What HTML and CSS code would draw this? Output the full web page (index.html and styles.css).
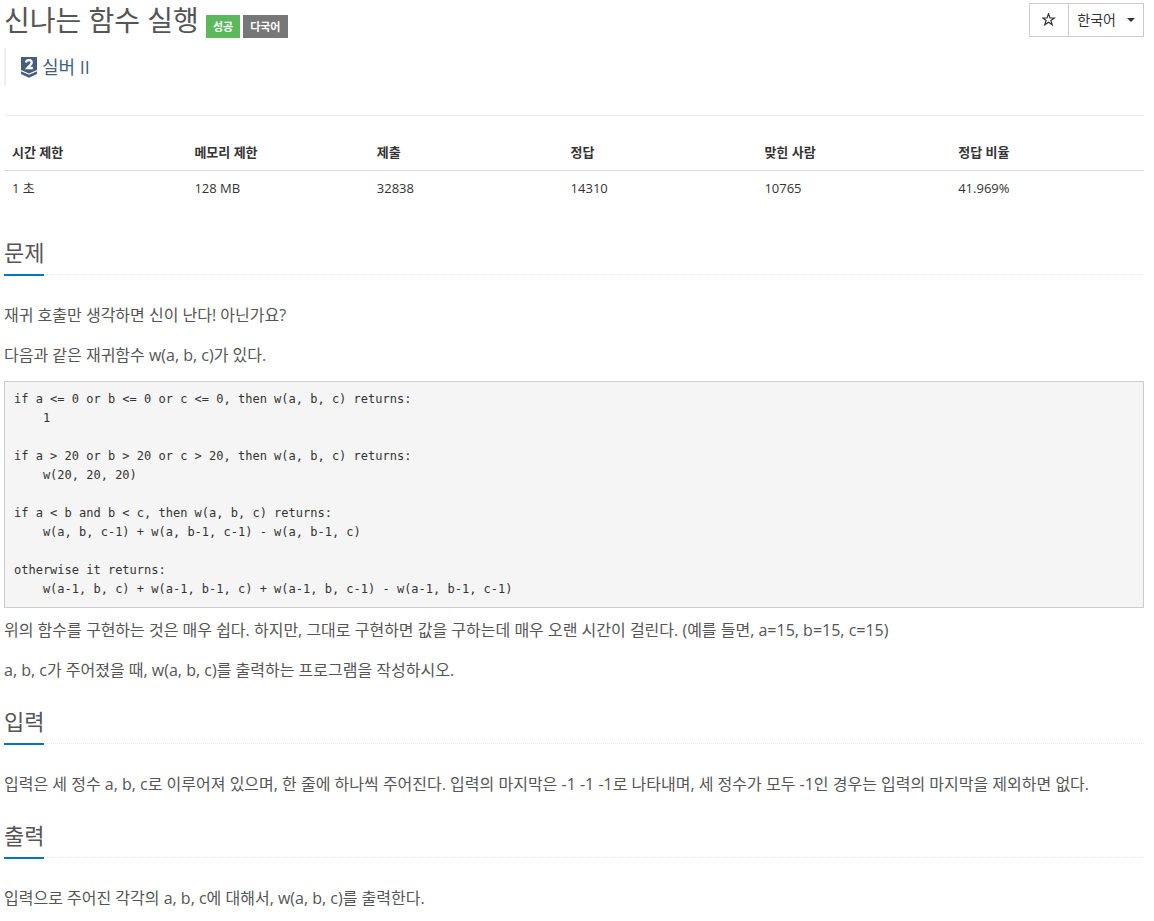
FILE: index.html
```html
<!DOCTYPE html>
<html lang="ko">
<head>
<meta charset="utf-8">
<title>신나는 함수 실행</title>
<link rel="stylesheet" href="styles.css">
</head>
<body>
<main class="problem">
  <header class="page-header">
    <div class="heading">
      <h1 class="title">신나는 함수 실행</h1>
      <span class="label label-success">성공</span>
      <span class="label label-language">다국어</span>
    </div>
    <div class="actions">
      <button class="action star" type="button" aria-label="즐겨찾기">
        <svg class="star-icon" viewBox="0 0 14 14"><path d="M6.500 0.800L8 5H12.300L8.900 7.500L10.200 11.700L6.500 9.200L2.800 11.700L4.100 7.500L0.700 5H5Z" fill="none" stroke="currentColor" stroke-width="1.200"/></svg>
      </button>
      <button class="action language" type="button">한국어 <span class="caret"></span></button>
    </div>
  </header>
  <blockquote class="tier">
    <svg class="tier-icon" viewBox="0 0 16 22"><path d="M0 1h16v13l-8 3.500-8-3.500z" fill="#435f7a"/><path d="M0 15.200l8 3.500 8-3.500v2.800l-8 3.800-8-3.800z" fill="#435f7a"/><path d="M5 6.500C5.200 4.900 6.500 4.200 8 4.200C9.700 4.200 10.700 5.100 10.700 6.400C10.700 8.200 8.800 9.600 6.500 12H11.800" fill="none" stroke="#fff" stroke-width="2.300"/></svg>
    <span>실버 II</span>
  </blockquote>
  <table class="info">
    <thead><tr><th class="narrow">시간 제한</th><th class="narrow">메모리 제한</th><th>제출</th><th>정답</th><th>맞힌 사람</th><th>정답 비율</th></tr></thead>
    <tbody><tr><td>1 초</td><td>128 MB</td><td>32838</td><td>14310</td><td>10765</td><td>41.969%</td></tr></tbody>
  </table>
  <section class="section">
    <div class="headline"><h2>문제</h2></div>
    <p>재귀 호출만 생각하면 신이 난다! 아닌가요?</p>
    <p>다음과 같은 재귀함수 w(a, b, c)가 있다.</p>
<pre class="code">if a &lt;= 0 or b &lt;= 0 or c &lt;= 0, then w(a, b, c) returns:
    1

if a &gt; 20 or b &gt; 20 or c &gt; 20, then w(a, b, c) returns:
    w(20, 20, 20)

if a &lt; b and b &lt; c, then w(a, b, c) returns:
    w(a, b, c-1) + w(a, b-1, c-1) - w(a, b-1, c)

otherwise it returns:
    w(a-1, b, c) + w(a-1, b-1, c) + w(a-1, b, c-1) - w(a-1, b-1, c-1)</pre>
    <p>위의 함수를 구현하는 것은 매우 쉽다. 하지만, 그대로 구현하면 값을 구하는데 매우 오랜 시간이 걸린다. (예를 들면, a=15, b=15, c=15)</p>
    <p>a, b, c가 주어졌을 때, w(a, b, c)를 출력하는 프로그램을 작성하시오.</p>
  </section>
  <section class="section">
    <div class="headline"><h2>입력</h2></div>
    <p>입력은 세 정수 a, b, c로 이루어져 있으며, 한 줄에 하나씩 주어진다. 입력의 마지막은 -1 -1 -1로 나타내며, 세 정수가 모두 -1인 경우는 입력의 마지막을 제외하면 없다.</p>
  </section>
  <section class="section">
    <div class="headline"><h2>출력</h2></div>
    <p>입력으로 주어진 각각의 a, b, c에 대해서, w(a, b, c)를 출력한다.</p>
  </section>
</main>
</body>
</html>
```
FILE: styles.css
```css
* { box-sizing: border-box; }
body { margin: 0; font-family: "Open Sans", "Noto Sans CJK KR", sans-serif; font-size: 13px; line-height: 20px; color: #333; background: #fff; }
.problem { padding: 3px 10px 0 4px; }
.page-header { display: flex; justify-content: space-between; align-items: flex-start; min-height: 45px; }
.heading { display: flex; align-items: flex-end; gap: 3px; }
.title { margin: 0 4px 0 0; font-size: 28px; line-height: 35px; font-weight: 400; color: #555; }
.label { padding: 0 7px; font-size: 11px; line-height: 23px; font-weight: 700; color: #fff; }
.label-success { background: #5cb85c; }
.label-language { background: #777; }
.actions { display: flex; }
.action { display: flex; align-items: center; justify-content: center; height: 34px; padding: 0 8px; border: 1px solid #ccc; background: #fff; color: #333; font: inherit; font-size: 14px; }
.star { width: 40px; }
.star-icon { flex: none; width: 14px; height: 14px; }
.language { margin-left: -1px; gap: 11px; }
.caret { border: 4px solid transparent; border-top-color: #333; border-bottom: 0; }
.tier { display: flex; align-items: center; gap: 5px; height: 38px; margin: 0 0 29px; padding: 0 0 0 15px; border-left: 2px solid #eee; font-size: 18px; color: #435f7a; }
.tier-icon { width: 16px; height: 22px; }
.info { width: 100%; margin-bottom: 21px; table-layout: fixed; border-collapse: collapse; border-top: 1px solid #eee; }
.info th, .info td { padding: 8px; line-height: 19px; text-align: left; }
.info th { padding-top: 27px; border-bottom: 1px solid #ddd; font-weight: 700; }
.info .narrow { width: 16%; }
.section { padding-top: 10px; }
.headline { display: flex; border-bottom: 1px dotted #e4e9f0; margin-bottom: 26px; }
.headline h2 { margin: 0 0 -2px; padding-bottom: 6px; font-size: 22px; line-height: 31px; font-weight: 400; color: #555; border-bottom: 2px solid #0076c0; }
.section p { margin: 0 0 12px; font-size: 16px; line-height: 28px; color: #555; }
.section .code { margin: 0 0 8px; padding: 8px 9px; border: 1px solid #ccc; background: #f5f5f5; color: #333; font: 12px/19px "DejaVu Sans Mono", monospace; }
```
